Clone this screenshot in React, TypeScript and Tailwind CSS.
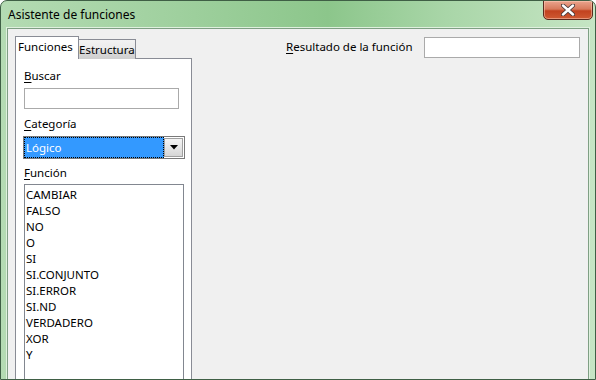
import React from "react";

const items = ["CAMBIAR", "FALSO", "NO", "O", "SI", "SI.CONJUNTO", "SI.ERROR", "SI.ND", "VERDADERO", "XOR", "Y"];

function U({ c, rest }: { c: string; rest: string }) {
  return (
    <span>
      <span className="underline underline-offset-2">{c}</span>
      {rest}
    </span>
  );
}

export default function App() {
  return (
    <div
      className="w-[596px] h-[380px] overflow-hidden relative rounded-t-[7px] border border-[#3f5f45] bg-[linear-gradient(90deg,#b4dbb3_0%,#9fd09e_30%,#8cc68b_55%,#a9d6a8_75%,#c6e5c4_100%)] flex flex-col text-[11.5px] text-black"
      style={{ fontFamily: '"Noto Sans", "Open Sans", sans-serif' }}
    >
      {/* title bar */}
      <div className="h-[27px] flex items-start shrink-0 relative">
        <div className="pl-[7px] pt-[6px] leading-[16px] text-[12px] text-black">Asistente de funciones</div>
        <div className="absolute right-[2px] top-[-1px] w-[50px] h-[20px] rounded-b-[5px] border border-[#5a2a1e] bg-[linear-gradient(180deg,#eaa48e_0%,#d77a5c_45%,#c2421f_55%,#cf5a33_100%)] flex items-center justify-center shadow-[inset_0_0_0_1px_rgba(255,210,190,0.5)]">
          <svg width="14" height="12" viewBox="0 0 14 12">
            <path d="M2 1.5 L12 10.5 M12 1.5 L2 10.5" stroke="#4a3a3a" strokeWidth="4.2" strokeLinecap="round" />
            <path d="M2 1.5 L12 10.5 M12 1.5 L2 10.5" stroke="#ffffff" strokeWidth="2.4" strokeLinecap="round" />
          </svg>
        </div>
      </div>
      {/* client */}
      <div className="h-[400px] shrink-0 ml-[6px] mr-[6px] border border-[#7f9f84] bg-[#f0f0f0] flex pt-[7px] pl-[7px] shadow-[0_0_0_1px_#dff0de]">
        {/* left column */}
        <div className="w-[177px] flex flex-col shrink-0">
          <div className="flex items-end h-[23px] relative z-10">
            <div className="w-[64px] h-[23px] bg-white border border-[#898c95] border-b-0 pl-[2px] pt-[2px] leading-[16px]">Funciones</div>
            <div className="w-[57px] h-[20px] border border-[#898c95] border-l-0 border-b-0 bg-[linear-gradient(180deg,#f2f2f2_0%,#ebebeb_50%,#dddddd_51%,#cfcfcf_100%)] pl-[0px] pt-[2px] leading-[16px]">Estructura</div>
          </div>
          <div className="flex-1 -mt-[1px] bg-white border border-[#898c95] pl-[8px] pt-[9px] flex flex-col">
            <div className="leading-[16px] h-[16px]"><U c="B" rest="uscar" /></div>
            <div className="mt-[4px] w-[155px] h-[21px] border border-[#aaaaaa] bg-white" />
            <div className="mt-[7px] leading-[16px] h-[16px]"><U c="C" rest="ategoría" /></div>
            <div className="mt-[4px] -ml-[1px] w-[162px] h-[23px] border border-[#7a7a7a] flex bg-white">
              <div className="flex-1 m-0 border border-dotted border-black bg-[#3399ff] text-white leading-[19px] pl-[1px]">Lógico</div>
              <div className="w-[19px] mt-[1px] mb-[1px] mr-[1px] ml-[0px] border border-[#a0a0a0] bg-[linear-gradient(180deg,#f4f4f4_0%,#e6e6e6_50%,#d6d6d6_100%)] flex items-center justify-center">
                <svg width="8" height="5" viewBox="0 0 8 5"><path d="M0 0 H8 L4 4.5 Z" fill="#000" /></svg>
              </div>
            </div>
            <div className="mt-[6px] leading-[16px] h-[16px]"><U c="F" rest="unción" /></div>
            <div className="mt-[3px] w-[160px] flex-1 border border-[#828790] bg-white pt-[2px]">
              {items.map((it) => (
                <div key={it} className="leading-[16px] h-[16px] pl-[1px]">{it}</div>
              ))}
            </div>
          </div>
        </div>
        {/* right side */}
        <div className="flex-1 flex items-start pl-[94px] pt-[1px]">
          <div className="leading-[16px] pt-[2px] w-[138px]"><U c="R" rest="esultado de la función" /></div>
          <div className="w-[156px] h-[21px] border border-[#aaaaaa] bg-white" />
        </div>
      </div>
    </div>
  );
}
